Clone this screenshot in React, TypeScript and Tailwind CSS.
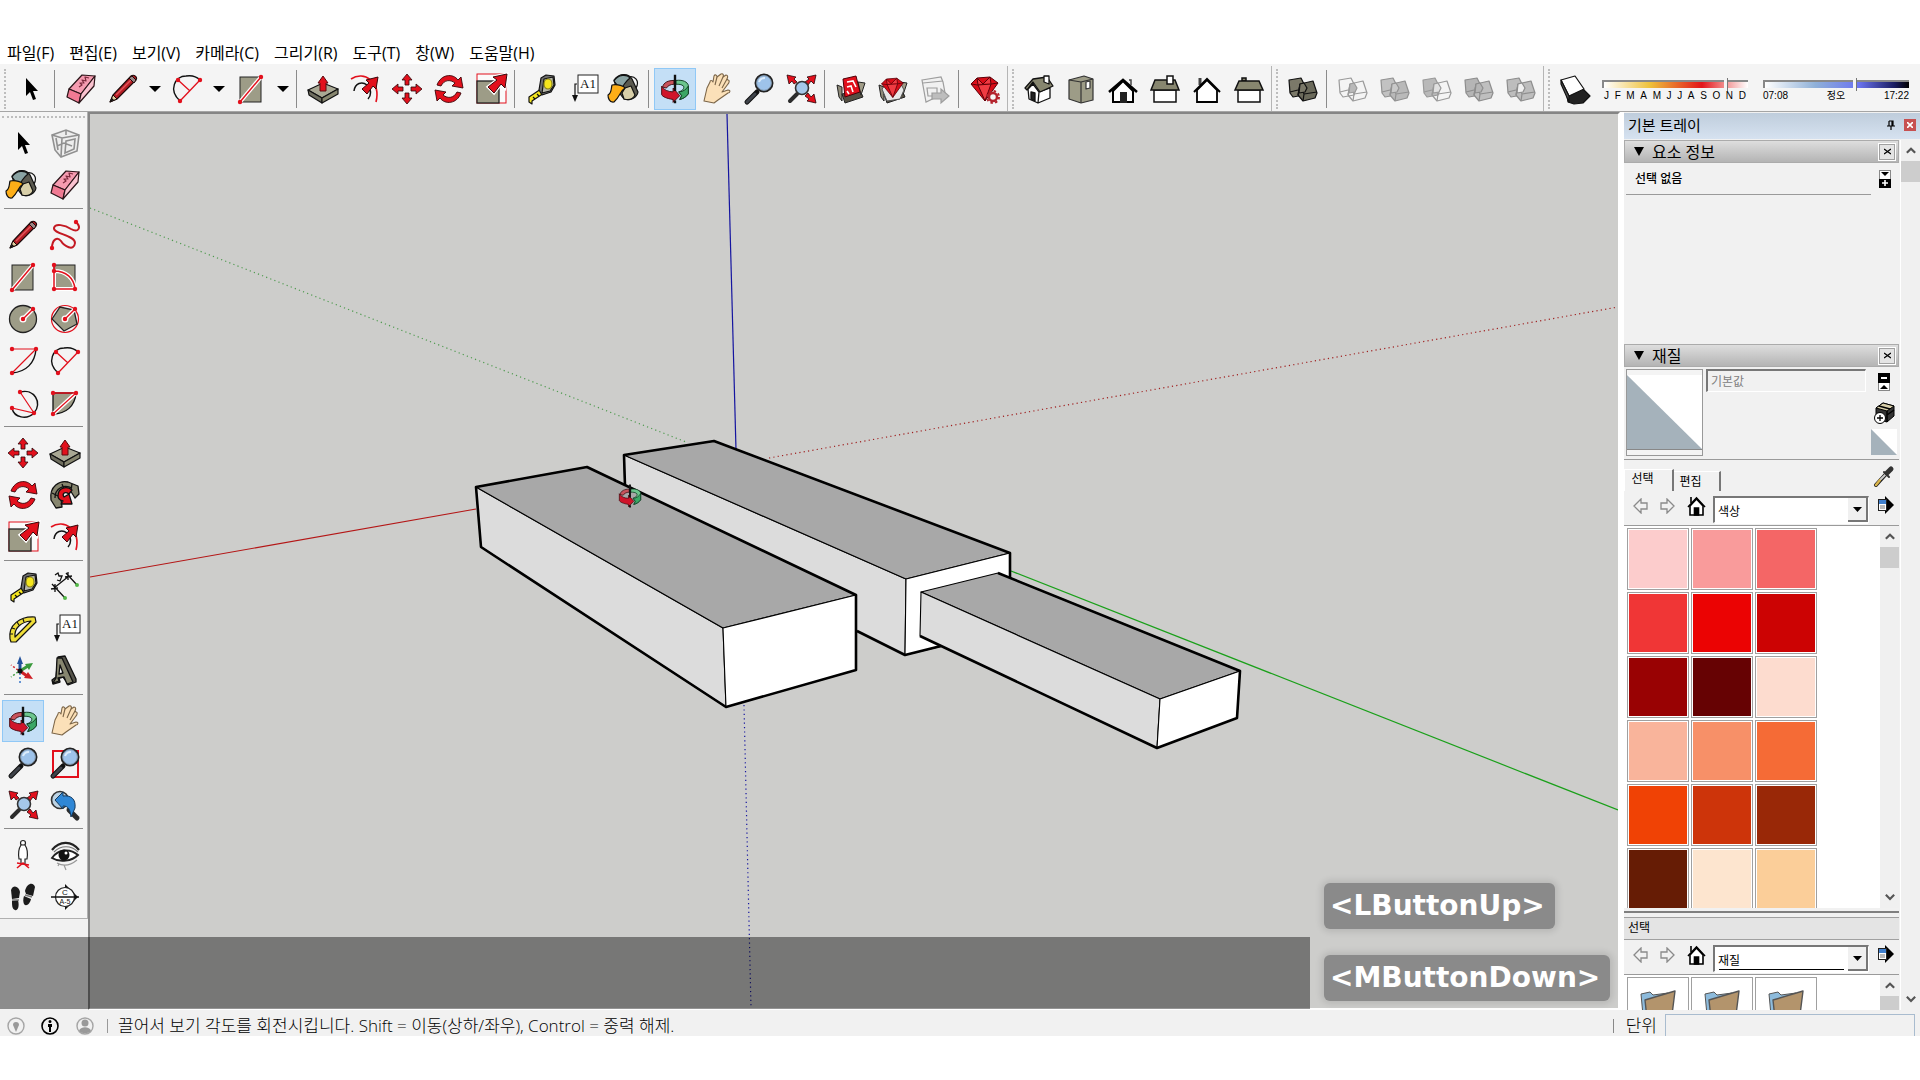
import type { FC, ReactNode } from 'react';

const RED = '#e2101c';
const STONE = '#9d9c87';

/* ---------- shared drawing parts ---------- */

const Dots: FC<{ at: [number, number][] }> = ({ at }) => (
  <g fill={RED}>
    {at.map(([x, y]) => (
      <circle key={`${x}-${y}`} cx={x} cy={y} r="2.2" />
    ))}
  </g>
);

const arrowUp = 'M21 6 L26 12 H23 V17 H19 V12 H16 Z';
const bigArrow = 'M37 6 L35 20 L31 16 L24 25 L18 19 L27 12 L23 9 Z';

const lens = (
  <>
    <path d="M9 34 L19 24" stroke="#111" strokeWidth="5" strokeLinecap="round" />
    <path d="M9 34 L17 26" stroke="#3f434a" strokeWidth="3" strokeLinecap="round" />
    <circle cx="26" cy="15" r="8.5" fill="#9ec3ea" stroke="#222" strokeWidth="2" />
    <circle cx="26" cy="15" r="7.4" fill="none" stroke="#7f93a8" strokeWidth="1" />
    <path d="M21 14 A6 6 0 0 1 27 10" stroke="#dcecfb" strokeWidth="2" />
  </>
);

const orbit = (
  <>
    <path d="M8 19 C9 14 14 12 20 12 V16 C16 16 13 18 12 20 Z" fill="#c8535b" stroke="#401014" />
    <path d="M22 12 C30 11 34 14 35 17 V26 C33 29 30 31 26 32 L28 28 L25 24 C29 23 31 20 30 18 C28 16 25 16 22 16 Z" fill="#6cc58d" stroke="#0f3d22" />
    <path d="M35 18 V26 C33 29 30 31 26 32 L28 28 L25 24 C30 24 33 21 35 18 Z" fill="#3aa765" stroke="#0f3d22" />
    <path d="M7 18 C9 22 14 24 19 24 V20 L26 28 L19 35 V32 C12 31 8 29 7 27 Z" fill="#d0142a" stroke="#4a0a10" />
    <path d="M21 6 V23 M21 33 V36" stroke="#111" strokeWidth="2.5" />
  </>
);

const solid = (back: string, front: string, line: string, inner: string) => (
  <g stroke={line} strokeWidth="1.2" strokeLinejoin="round">
    <path d="M7 12 L19 10 L24 20 L22 27 L11 29 L8 25 Z" fill={back} />
    <path d="M18 16 L31 13 L35 25 L33 30 L21 33 L16 27 Z" fill={front} />
    <path d="M16 27 L18 16 M21 33 L22 26 L35 24 M22 26 L18 16 M8 24 L16 22" fill="none" />
    <path d="M18 16 L22 15 L25 20 L23 24 L17 25 Z" fill={inner} />
  </g>
);

const openBox = (
  <g stroke="#222" strokeLinejoin="round">
    <path d="M7 17 L12 19 L12 33 L9 29 Z" fill="#8e8a78" />
    <path d="M12 26 L30 22 L33 29 L15 35 Z" fill="#555043" />
    <path d="M28 14 L35 15 L31 27 Z" fill="#a19d89" />
  </g>
);

const gem = (
  <g stroke="#5d0008" strokeWidth="1" strokeLinejoin="round">
    <path d="M7 16 L13 10 L26 9 L34 15 L21 33 Z" fill="#d90d18" />
    <path d="M7 16 L14 17 L27 16 L34 15 M14 17 L13 10 L19 16 L26 9 L27 16 L21 33 L14 17" fill="#ef3b42" />
  </g>
);

const icons: Record<string, ReactNode> = {
  select: <path d="M16 10 V28 L20 24 L23 32 L26 31 L23 23 H28 Z" fill="#000" />,
  component: (
    <g stroke="#909090" fill="none" strokeWidth="1.6">
      <path d="M8 13 L22 8 L35 13 L33 29 L17 35 L11 28 Z" fill="#ededed" />
      <path d="M8 13 L18 16 L35 13 M18 16 L17 35 M22 8 L22 13 M12 16 L14 28 M22 19 L31 17 L30 27 L21 31 Z M13 24 L20 21 L28 24" />
    </g>
  ),
  bucket: (
    <g stroke="#111" strokeWidth="1.2" strokeLinejoin="round">
      <path d="M24 9 C31 7 36 13 32 20" fill="none" />
      <path d="M10 12 C16 4 25 6 28 11 L34 24 C33 30 26 33 20 31 L13 22 Z" fill="#5b5a50" />
      <path d="M21 20 L27 18 L31 27 C29 31 26 33 20 31 L18 25 Z" fill="#d8cfa9" />
      <path d="M10 13 C14 6 23 6 26 10 C22 13 18 19 17 22 Z" fill="#8aa3a3" />
      <path d="M8 17 C14 16 20 18 21 20 C16 23 16 29 10 34 C5 35 4 29 4 27 C8 25 7 20 8 17 Z" fill="#fdae17" />
    </g>
  ),
  eraser: (
    <g stroke="#2a1418" strokeWidth="1.2" strokeLinejoin="round">
      <path d="M22 7 L35 8 L21 26 L9 21 Z" fill="#f59bb0" />
      <path d="M9 21 L21 26 L19 35 L7 29 Z" fill="#f07a93" />
      <path d="M21 26 L35 8 L34 18 L19 35 Z" fill="#fbc3d0" />
      <path d="M19 19 L22 17 L20 15 L24 15 L22 12 L26 13 L25 9 L29 10" fill="none" stroke="#7c2a3d" />
    </g>
  ),
  pencil: (
    <g strokeLinejoin="round">
      <path d="M8 34 L11 27 L29 8 C32 6 36 9 34 12 L15 31 Z" fill="#b51d24" stroke="#1c0a0a" strokeWidth="1.1" />
      <path d="M8 34 L11 27 L15 31 Z" fill="#e5cf9f" stroke="#1c0a0a" />
      <path d="M8 34 L10 30 L12 32 Z" fill="#111" />
      <path d="M14 27 L29 12" stroke="#e2565b" strokeWidth="1.5" />
      <path d="M27 10 L32 15 L34 12 L30 8 Z" fill="#9b8686" stroke="#1c0a0a" />
    </g>
  ),
  freehand: (
    <>
      <path d="M32 8 C38 14 34 19 27 15 C21 11 11 9 10 14 C9 20 31 21 31 29 C30 38 20 32 17 27 C13 22 8 26 8 34" fill="none" stroke="#c31922" strokeWidth="2" />
      <Dots at={[[32, 8], [8, 34]]} />
    </>
  ),
  rect: (
    <>
      <rect x="10" y="9" width="21" height="25" fill={STONE} stroke="#222" />
      <path d="M10 34 L31 9" stroke="#fff" strokeWidth="4" />
      <path d="M10 34 L31 9" stroke={RED} strokeWidth="1.5" />
      <Dots at={[[10, 34], [31, 9]]} />
    </>
  ),
  rotatedRect: (
    <>
      <rect x="10" y="9" width="21" height="25" fill={STONE} stroke="#222" />
      <path d="M10 15 C22 15 30 22 31 33 H10 Z" fill={STONE} stroke="#fff" strokeWidth="4" />
      <path d="M10 9 V33 H31 C30 22 22 15 10 15" fill="none" stroke={RED} strokeWidth="1.5" />
      <Dots at={[[10, 9], [10, 15], [10, 33], [31, 33]]} />
    </>
  ),
  circle: (
    <>
      <circle cx="21" cy="21" r="13.5" fill={STONE} stroke="#222" strokeWidth="1.3" />
      <path d="M21 21 L31 11" stroke="#fff" strokeWidth="4" />
      <circle cx="21" cy="21" r="3.5" fill="#fff" />
      <path d="M21 21 L31 11" stroke={RED} strokeWidth="1.5" />
      <Dots at={[[21, 21], [31, 11]]} />
    </>
  ),
  polygon: (
    <>
      <circle cx="21" cy="21" r="13.5" fill="none" stroke={RED} strokeWidth="1.2" />
      <path d="M8 21 L16 9 L30 12 L33 26 L20 33 Z" fill={STONE} stroke="#222" strokeWidth="1.3" />
      <path d="M21 21 L31 11" stroke="#fff" strokeWidth="4" />
      <circle cx="21" cy="21" r="3.5" fill="#fff" />
      <path d="M21 21 L31 11" stroke={RED} strokeWidth="1.5" />
      <Dots at={[[21, 21], [31, 11]]} />
    </>
  ),
  arcCenter: (
    <>
      <path d="M34 9 C33 23 24 32 10 33" fill="none" stroke="#111" strokeWidth="1.4" />
      <path d="M10 9 H34 L10 33" fill="none" stroke={RED} strokeWidth="1.2" />
      <Dots at={[[10, 9], [34, 9], [10, 33]]} />
    </>
  ),
  arc: (
    <>
      <path d="M14 33 C2 22 9 8 20 8 C26 7 31 9 34 12" fill="none" stroke="#111" strokeWidth="1.4" />
      <path d="M14 33 L34 12 M12 12 L24 23" stroke={RED} strokeWidth="1.3" />
      <Dots at={[[12, 12], [34, 12], [14, 33]]} />
    </>
  ),
  arc3: (
    <>
      <path d="M18 10 C32 6 41 21 32 31 C25 38 12 36 10 26" fill="none" stroke="#111" strokeWidth="1.4" />
      <path d="M18 10 L32 31 L10 26" fill="none" stroke={RED} strokeWidth="1.2" />
      <Dots at={[[18, 10], [10, 26], [32, 31]]} />
    </>
  ),
  pie: (
    <>
      <path d="M9 11 H32 C31 24 22 32 9 32 Z" fill={STONE} stroke="#111" strokeWidth="1.3" />
      <path d="M32 11 L9 32" stroke="#fff" strokeWidth="4" />
      <path d="M9 11 H32 L9 32" fill="none" stroke={RED} strokeWidth="1.3" />
      <Dots at={[[9, 11], [32, 11], [9, 32]]} />
    </>
  ),
  move: (
    <g fill={RED} stroke="#2a0508" strokeWidth="0.8">
      <path d={arrowUp} />
      <path d={arrowUp} transform="rotate(90 21 21)" />
      <path d={arrowUp} transform="rotate(180 21 21)" />
      <path d={arrowUp} transform="rotate(270 21 21)" />
    </g>
  ),
  pushPull: (
    <>
      <g stroke="#111" strokeWidth="1.2" strokeLinejoin="round">
        <path d="M6 22 L21 15 L36 21 L20 30 Z" fill="#a9a894" />
        <path d="M6 22 L20 30 V35 L7 27 Z" fill="#6f6e5f" />
        <path d="M20 30 L36 21 V26 L20 35 Z" fill="#87866f" />
      </g>
      <path d="M21 8 L26 15 H24 V23 H18 V15 H16 Z" fill={RED} stroke="#5a0a0e" />
    </>
  ),
  rotate: (
    <g fill={RED} stroke="#3a0508" strokeWidth="0.9" strokeLinejoin="round">
      <path d="M9 17 C13 6 25 5 30 12 L33 9 L35 20 L24 18 L27 15 C22 11 16 12 13 18 Z" />
      <path d="M9 17 C13 6 25 5 30 12 L33 9 L35 20 L24 18 L27 15 C22 11 16 12 13 18 Z" transform="rotate(180 21 21)" />
    </g>
  ),
  followMe: (
    <g stroke="#111" strokeWidth="1.3" strokeLinejoin="round">
      <path d="M7 26 C5 12 16 6 24 8 L34 12 L35 20 L31 24 L26 16 C20 14 15 19 17 25 L18 33 L12 34 Z" fill="#87866f" />
      <path d="M11 24 C11 14 20 10 28 14 M8 19 L14 22 M18 10 L20 15 M28 10 L27 16" fill="none" />
      <path d="M14 22 C14 13 23 12 28 16 L25 20 C20 17 18 20 20 23 L25 20 L28 30 L17 30 L19 27 C15 26 14 24 14 22 Z" fill={RED} />
    </g>
  ),
  scale: (
    <>
      <rect x="7" y="6" width="29" height="29" fill="#fff" fillOpacity="0.5" stroke={RED} />
      <rect x="7" y="13" width="22" height="22" fill={STONE} stroke="#222" strokeWidth="1.3" />
      <path d={bigArrow} fill={RED} stroke="#fff" strokeWidth="3" />
      <path d={bigArrow} fill={RED} stroke="#3a0508" />
    </>
  ),
  offset: (
    <>
      <path d="M7 11 C20 2 37 14 32 34" fill="none" stroke={RED} strokeWidth="1.6" />
      <path d="M10 23 C11 15 18 13 23 17 C28 22 27 28 24 31" fill="none" stroke="#111" strokeWidth="1.5" />
      <path d="M34 9 L32 21 L29 18 L23 26 L18 21 L25 15 L22 12 Z" fill={RED} stroke="#3a0508" />
    </>
  ),
  tape: (
    <g stroke="#111" strokeWidth="1.2" strokeLinejoin="round">
      <path d="M9 29 L21 21 L24 25 L12 33 V36 L9 34 Z" fill="#f5e61d" />
      <path d="M21 10 L26 7 L34 8 L35 17 L31 24 L22 27 L19 22 Z" fill="#6f7070" />
      <path d="M24 11 L33 9 L34 17 L30 23 L22 25 Z" fill="#b5b5a8" />
      <ellipse cx="28" cy="16" rx="4" ry="5" fill="#f5e61d" stroke="#8d8617" />
      <path d="M13 29 L15 31 M17 26 L19 28" />
    </g>
  ),
  dimension: (
    <>
      <path d="M10 22 L25 10 M8 18 L21 32 M22 7 L33 19 M7 23 L14 22 M21 11 L28 10 M11 18 L11 26 M24 6 V14" stroke="#111" strokeWidth="1.3" />
      <path d="M11 9 L14 7 L15 10 L18 10 L16 15 L13 14" fill="none" stroke="#111" strokeWidth="1.3" />
      <circle cx="21" cy="32" r="2" fill="#54b749" />
      <circle cx="33" cy="19" r="2" fill="#54b749" />
    </>
  ),
  protractor: (
    <g stroke="#111" strokeWidth="1.2" strokeLinejoin="round">
      <path d="M8 31 C6 17 18 8 33 9 L34 14 L14 34 L9 34 Z" fill="#efdd38" />
      <path d="M13 29 C12 20 19 14 29 13 Z" fill="#f4f4f4" />
      <path d="M8 26 L11 26 M10 20 L13 21 M15 14 L17 17 M21 11 L22 14" />
    </g>
  ),
  text: (
    <>
      <path d="M15 16 H13 V28" fill="none" stroke="#111" strokeWidth="1.2" />
      <path d="M10 27 H16 L13 34 Z" fill="#111" />
      <rect x="16" y="7" width="20" height="18" fill="#fff" stroke="#222" />
      <text x="26" y="20" textAnchor="middle" fontSize="13" fontFamily="Liberation Serif, serif" fill="#111">A1</text>
    </>
  ),
  axes: (
    <>
      <path d="M18 21 V12" stroke="#23529c" strokeWidth="3" />
      <path d="M18 6 L21 14 H15 Z" fill="#23529c" />
      <path d="M18 21 L26 16" stroke="#3a9a3c" strokeWidth="3" />
      <path d="M31 13 L27 20 L23 14 Z" fill="#3a9a3c" />
      <path d="M18 21 L25 26" stroke="#cf2026" strokeWidth="3" />
      <path d="M31 29 L22 28 L26 22 Z" fill="#cf2026" />
      <path d="M18 23 V33" stroke="#3a75c8" strokeWidth="1.5" strokeDasharray="2 2" />
      <path d="M16 22 L9 27" stroke="#3a9a3c" strokeWidth="1.5" strokeDasharray="2 2" />
      <path d="M16 20 L9 15" stroke="#cf2026" strokeWidth="1.5" strokeDasharray="2 2" />
      <circle cx="18" cy="21" r="2.5" fill="#111" />
    </>
  ),
  text3d: (
    <g stroke="#111" strokeWidth="1.3" strokeLinejoin="round">
      <path d="M14 7 L21 6 L32 29 L32 32 L24 35 L22 31 L19 27 L15 28 L16 32 L9 34 L8 30 L12 27 Z" fill="#55544a" />
      <path d="M13 8 L18 8 L29 32 L23 34 L20 27 L14 28 L15 31 L9 33 L12 28 Z" fill="#87866f" />
      <path d="M16 15 L19 23 L15 24 Z" fill="#f4f4f4" />
    </g>
  ),
  orbit,
  pan: (
    <g stroke="#7b6548" strokeWidth="1.1" strokeLinejoin="round">
      <path d="M8 33 L11 20 L14 14 C14 12 16 12 17 14 L18 8 C19 6 21 7 21 9 L25 6 C27 5 28 7 27 9 L30 7 C32 7 32 9 31 11 L32 12 C34 12 33 15 32 16 L26 24 L32 22 C35 22 34 25 32 25 L22 32 L18 35 Z" fill="#fbe0b8" />
      <path d="M19 17 L21 9 M23 18 L27 9 M26 20 L31 11" fill="none" />
    </g>
  ),
  zoom: lens,
  zoomWindow: (
    <>
      <rect x="9" y="9" width="25" height="26" fill="none" stroke={RED} strokeWidth="2" />
      {lens}
    </>
  ),
  extents: (
    <>
      <g fill={RED} stroke="#2a0508" strokeWidth="0.8">
        <path d="M7 7 L16 9 L14 11 L17 14 L14 16 L12 13 L9 16 Z" />
        <path d="M36 7 L27 9 L29 11 L25 14 L28 17 L31 13 L34 16 Z" />
        <path d="M36 35 L27 33 L29 31 L25 28 L28 25 L31 29 L34 26 Z" />
      </g>
      <path d="M10 33 L17 26" stroke="#2c2c2c" strokeWidth="4" strokeLinecap="round" />
      <circle cx="22" cy="20" r="6.5" fill="#a5c8ea" stroke="#333" strokeWidth="1.6" />
    </>
  ),
  previous: (
    <>
      <path d="M25 26 L33 34" stroke="#2c2c2c" strokeWidth="5" strokeLinecap="round" />
      <circle cx="16" cy="16" r="8.5" fill="#bcd3e4" stroke="#333" strokeWidth="1.6" />
      <path d="M11 16 L19 8 V12 C27 11 32 15 31 24 L27 33 C26 26 25 22 19 22 V25 Z" fill="#2f87d6" stroke="#163a5d" />
    </>
  ),
  position: (
    <>
      <circle cx="21" cy="9" r="2.5" fill="#fff" stroke="#222" strokeWidth="1.2" />
      <path d="M19 11 H23 C25 14 26 19 25 25 H23 V30 H19 V25 H17 C16 19 17 14 19 11 Z" fill="#fff" stroke="#222" strokeWidth="1.2" />
      <path d="M15 34 L21 29 L27 34 M15 29 L27 31" fill="none" stroke={RED} strokeWidth="1.6" />
    </>
  ),
  look: (
    <>
      <path d="M8 16 C16 6 28 7 35 16" fill="none" stroke="#222" strokeWidth="2.2" />
      <path d="M10 18 C17 11 27 11 34 18" fill="none" stroke="#777" strokeWidth="1.2" />
      <path d="M8 24 C14 15 26 14 34 21 C28 27 16 29 8 24 Z" fill="#fff" stroke="#222" strokeWidth="2" />
      <circle cx="20" cy="21" r="5.5" fill="#111" />
      <circle cx="22" cy="19" r="1.5" fill="#fff" />
      <path d="M13 29 C20 33 27 31 33 26 M20 31 L22 36 M15 30 L14 32" fill="none" stroke="#999" strokeWidth="1.2" />
    </>
  ),
  walk: (
    <g fill="#1c1c1c">
      <path d="M9 14 C11 8 17 10 18 16 L17 22 L10 23 Z" />
      <path d="M10 25 L16 24 C18 32 15 35 13 34 C10 33 10 29 10 25 Z" />
      <path d="M23 15 C25 6 32 6 33 11 L31 20 L24 18 Z" />
      <path d="M22 20 L29 23 C28 28 24 31 22 28 C21 26 21 23 22 20 Z" />
      <path d="M10 24 H17 M23 19 L30 21" stroke="#777" strokeWidth="1.5" />
    </g>
  ),
  section: (
    <>
      <path d="M21 8 L34 21 L21 34 Z" fill="#111" />
      <circle cx="21" cy="21" r="9.5" fill="#fff" stroke="#222" strokeWidth="1.2" />
      <path d="M7 21 H35" stroke="#111" strokeWidth="1.5" />
      <g fill="#111" fontFamily="Liberation Sans, sans-serif" textAnchor="middle">
        <text x="21" y="19" fontSize="8">C</text>
        <text x="21" y="28" fontSize="7">A-5</text>
      </g>
    </>
  ),
  warehouse: (
    <>
      {openBox}
      <path d="M13 11 L26 8 L30 24 L15 29 Z" fill={RED} stroke="#4d0007" />
      <path d="M17 14 L23 13 L26 19 M17 19 L21 18 L23 24 M17 23 L19 26" fill="none" stroke="#fff" strokeWidth="1.6" />
    </>
  ),
  extension: (
    <>
      {openBox}
      <path d="M10 21 L16 14 L28 14 L32 22 L28 31 L15 33 Z" fill="#e8e8e8" stroke="#555" />
      <g transform="translate(4 3) scale(.8)">{gem}</g>
    </>
  ),
  send: (
    <g stroke="#9d9d9d" strokeWidth="1.2" fill="#f1f1f1">
      <path d="M8 12 L27 9 L29 14 L31 25 L12 34 Z" />
      <path d="M9 15 L29 13 M13 20 H23 V28 H14 Z" />
      <path d="M18 25 H27 V21 L35 28 L27 35 V31 H18 Z" fill="#bdbdbd" />
    </g>
  ),
  rubyGear: (
    <>
      {gem}
      <circle cx="29" cy="29" r="4" fill="#f4f4f4" stroke="#b3222c" strokeWidth="2.5" />
      <circle cx="29" cy="29" r="6" fill="none" stroke="#b3222c" strokeWidth="2" strokeDasharray="2.4 2.3" />
    </>
  ),
  viewIso: (
    <g stroke="#111" strokeWidth="1.3" strokeLinejoin="round">
      <path d="M10 21 L15 16 L21 24 L20 35 L11 31 Z M21 24 L32 20 V30 L20 35" fill="#fff" />
      <path d="M7 20 L15 11 L29 9 L35 18 L22 24 L15 14 L9 22 Z" fill="#87866f" />
      <path d="M26 8 H31 V16 L26 14 Z" fill="#fff" />
      <path d="M13 24 L17 25 V33 L13 31 Z" fill="#222" />
    </g>
  ),
  viewTop: (
    <g stroke="#333" strokeWidth="1.2" strokeLinejoin="round">
      <path d="M9 12 L24 8 L33 11 L33 32 L21 35 L9 31 Z" fill="#9d9c87" />
      <path d="M9 12 L21 14 V35 M21 14 L33 11" fill="none" />
      <path d="M26 14 L30 13 V20 L26 21 Z" fill="#fff" />
    </g>
  ),
  viewFront: (
    <>
      <path d="M11 23 V34 H31 V23 L21 13 Z" fill="#fff" stroke="#000" strokeWidth="2" />
      <path d="M7 24 L21 12 L35 24" fill="none" stroke="#000" strokeWidth="2.5" />
      <path d="M18 35 V24 H25 V35 Z" fill="#222" />
      <path d="M27 12 H29 V17" fill="none" stroke="#444" strokeWidth="1.5" />
    </>
  ),
  viewRight: (
    <g stroke="#111" strokeWidth="1.5">
      <path d="M10 22 H32 V34 H10 Z" fill="#fff" />
      <path d="M11 12 H31 L35 22 H7 Z" fill="#87866f" />
      <path d="M23 8 H29 V16 H23 Z" fill="#fff" />
    </g>
  ),
  viewBack: (
    <>
      <path d="M14 10 V17" stroke="#444" strokeWidth="3" />
      <path d="M11 22 V34 H31 V22 L21 12 Z" fill="#fff" stroke="#000" strokeWidth="1.8" />
      <path d="M8 24 L21 11 L34 24" fill="none" stroke="#000" strokeWidth="2" />
    </>
  ),
  viewLeft: (
    <g stroke="#111" strokeWidth="1.5">
      <path d="M14 10 H18 V13 H14 Z" fill="#87866f" />
      <path d="M10 22 H32 V34 H10 Z" fill="#fff" />
      <path d="M11 13 H31 L35 22 H7 Z" fill="#87866f" />
    </g>
  ),
  outerShell: solid('#7b7969', '#6b6a5b', '#111', '#7b7969'),
  intersect: solid('none', 'none', '#9a9a9a', '#b9b9b9'),
  union: solid('#c2c2c2', '#b9b9b9', '#929292', '#c9c9c9'),
  subtract: solid('#b9b9b9', 'none', '#9a9a9a', '#e0e0e0'),
  trim: solid('#b5b5b5', '#bfbfbf', '#8d8d8d', '#b5b5b5'),
  split: solid('#bdbdbd', '#bdbdbd', '#8d8d8d', '#f0f0f0'),
  shadow: (
    <g stroke="#111" strokeWidth="1.2" strokeLinejoin="round">
      <path d="M13 28 L29 21 L36 28 L29 35 L20 36 L14 34 Z" fill="#222" />
      <path d="M7 12 L21 8 L30 21 L15 28 Z" fill="#fff" />
      <path d="M7 12 L15 28 V34 L7 16 Z" fill="#555" />
    </g>
  ),
};

/* ---------- toolbars ---------- */

const Tool: FC<{ name: string; active?: boolean }> = ({ name, active }) => (
  <button
    type="button"
    aria-label={name}
    className={
      active
        ? 'size-[42px] shrink-0 border border-[#90c8f6] bg-[#c4dff6]'
        : 'size-[42px] shrink-0'
    }
  >
    <svg viewBox="0 0 42 42" fill="none" className="size-full">{icons[name]}</svg>
  </button>
);

const DropTool: FC<{ name: string }> = ({ name }) => (
  <div className="flex items-center">
    <Tool name={name} />
    <button type="button" aria-label={`${name} menu`} className="flex w-[22px] justify-center">
      <svg viewBox="0 0 12 8" className="w-3"><path d="M0 1 H12 L6 7 Z" /></svg>
    </button>
  </div>
);

const Divider: FC = () => <div className="ml-0.5 mr-[5px] h-[38px] w-px shrink-0 bg-[#8b8b8b]" />;
const Grip: FC = () => <div className="mx-1 h-10 w-0 shrink-0 border-l-2 border-dotted border-[#bdbdbd]" />;
const BarEnd: FC = () => <div className="ml-px h-full w-px shrink-0 bg-[#b5b5b5]" />;

const toolGroups = [
  ['pushPull', 'offset', 'move', 'rotate', 'scale'],
  ['tape', 'text', 'bucket'],
  ['orbit', 'pan', 'zoom', 'extents'],
  ['warehouse', 'extension', 'send'],
  ['rubyGear'],
];
const viewTools = ['viewIso', 'viewTop', 'viewFront', 'viewRight', 'viewBack', 'viewLeft'];
const solidTools = ['intersect', 'union', 'subtract', 'trim', 'split'];

const rangeClass =
  'block h-2 w-full appearance-none border-l-2 border-t-2 border-[#888] [&::-webkit-slider-thumb]:h-[13px] [&::-webkit-slider-thumb]:w-1 [&::-webkit-slider-thumb]:appearance-none [&::-webkit-slider-thumb]:border-r [&::-webkit-slider-thumb]:border-[#777] [&::-webkit-slider-thumb]:bg-[#f4f4f4]';

const TopToolbar: FC = () => (
  <div className="flex h-12 shrink-0 items-center overflow-hidden border-b border-[#a5a5a5] bg-[#f4f4f4] pt-0.5">
    <Grip />
    <Tool name="select" />
    <Divider />
    <Tool name="eraser" />
    <DropTool name="pencil" />
    <DropTool name="arc" />
    <DropTool name="rect" />
    {toolGroups.map((group) => (
      <div key={group[0]} className="flex items-center">
        <Divider />
        {group.map((name) => (
          <Tool key={name} name={name} active={name === 'orbit'} />
        ))}
      </div>
    ))}
    <BarEnd />
    <Grip />
    {viewTools.map((name) => <Tool key={name} name={name} />)}
    <BarEnd />
    <Grip />
    <Tool name="outerShell" />
    <Divider />
    {solidTools.map((name) => <Tool key={name} name={name} />)}
    <BarEnd />
    <Grip />
    <Tool name="shadow" />
    <div className="ml-1.5 mt-1 flex gap-[15px] font-['Liberation_Sans','Noto_Sans_CJK_KR',sans-serif] text-[10px] leading-3">
      <div className="w-[146px]">
        <input
          type="range"
          aria-label="날짜"
          defaultValue={86}
          className={`${rangeClass} bg-[linear-gradient(to_right,#ffffff,#eec13a_32%,#e3141a_68%,#f08080_82%,#ffffff)]`}
        />
        <div className="mt-0.5 flex justify-between px-0.5">
          {'JFMAMJJASOND'.split('').map((month, i) => <span key={i}>{month}</span>)}
        </div>
      </div>
      <div className="w-[146px]">
        <input
          type="range"
          aria-label="시간"
          defaultValue={63}
          className={`${rangeClass} bg-[linear-gradient(to_right,#ffffff,#8fb0d8_35%,#6b74f0_65%,#1a1c60_90%,#000000)]`}
        />
        <div className="mt-0.5 flex justify-between">
          <span>07:08</span>
          <span>정오</span>
          <span>17:22</span>
        </div>
      </div>
    </div>
  </div>
);

const sideGroups = [
  ['select', 'component', 'bucket', 'eraser'],
  ['pencil', 'freehand', 'rect', 'rotatedRect', 'circle', 'polygon', 'arcCenter', 'arc', 'arc3', 'pie'],
  ['move', 'pushPull', 'rotate', 'followMe', 'scale', 'offset'],
  ['tape', 'dimension', 'protractor', 'text', 'axes', 'text3d'],
  ['orbit', 'pan', 'zoom', 'zoomWindow', 'extents', 'previous'],
  ['position', 'look', 'walk', 'section'],
];

const SideToolbar: FC = () => (
  <aside className="w-[88px] shrink-0 bg-[#f1f1f1]">
    <div className="border-b border-r border-[#b0b0b0] bg-[#f4f4f4] px-0.5 pt-1">
      <div className="mb-1 border-t-2 border-dotted border-[#bdbdbd]" />
      {sideGroups.map((group, i) => (
        <div key={group[0]}>
          {i > 0 && <div className="mx-0.5 mb-[5px] mt-0.5 h-px bg-[#8b8b8b]" />}
          <div className="grid grid-cols-[42px_42px]">
            {group.map((name) => (
              <Tool key={name} name={name} active={name === 'orbit'} />
            ))}
          </div>
        </div>
      ))}
    </div>
  </aside>
);

/* ---------- model view ---------- */

const Scene: FC = () => (
  <svg viewBox="90 114 1528 894" preserveAspectRatio="xMinYMin slice" className="size-full">
    <g fill="none" strokeWidth="1.2">
      <path d="M727 114 L736 450" stroke="#1414a0" />
      <path d="M744 705 L751 1008" stroke="#1414a0" strokeDasharray="1.2 3.2" />
      <path d="M1011 571 L1618 810" stroke="#1aa01a" />
      <path d="M90 208 L686 442" stroke="#4f9a4f" strokeDasharray="1.2 3.2" />
      <path d="M90 577 L476 509" stroke="#b41616" />
      <path d="M769 458 L1618 307" stroke="#a02020" strokeDasharray="1.2 3.2" />
    </g>
    <g stroke="#000" strokeWidth="1.1" strokeLinejoin="round">
      <path d="M624 455 L906 579 L905 655 L857 631 L625 500 Z" fill="#dcdcdc" />
      <path d="M624 455 L714 441 L1010 553 L906 579 Z" fill="#a8a8a8" />
      <path d="M906 579 L1010 553 V630 L905 655 Z" fill="#fff" />
      <path d="M921 592 L998 573 L1240 671 L1160 699 Z" fill="#a8a8a8" />
      <path d="M921 592 L1160 699 L1157 748 L941 646 L920 636 Z" fill="#dcdcdc" />
      <path d="M1160 699 L1240 671 L1237 718 L1157 748 Z" fill="#fff" />
    </g>
    <g fill="none" stroke="#000" strokeWidth="2.6" strokeLinejoin="round">
      <path d="M625 486 L624 455 L714 441 L1010 553 V578" />
      <path d="M857 631 L905 655 L941 646" />
      <path d="M998 573 L1240 671 L1237 718 L1157 748 L920 636" />
    </g>
    <g stroke="#000" strokeWidth="1.1" strokeLinejoin="round">
      <path d="M476 487 L723 628 L726 707 L481 547 Z" fill="#dcdcdc" />
      <path d="M476 487 L587 467 L856 595 L723 628 Z" fill="#a8a8a8" />
      <path d="M723 628 L856 595 V670 L726 707 Z" fill="#fff" />
      <path d="M476 487 L587 467 L856 595 V670 L726 707 L481 547 Z" fill="none" strokeWidth="2.6" />
    </g>
    <svg x="614" y="480" width="32" height="32" viewBox="0 0 42 42" fill="none">{orbit}</svg>
  </svg>
);

/* ---------- tray ---------- */

const Chevron: FC<{ down?: boolean }> = ({ down }) => (
  <svg viewBox="0 0 12 8" className="w-2.5" fill="none" stroke="#555" strokeWidth="2.6">
    <path d={down ? 'M1 1 L6 6 L11 1' : 'M1 7 L6 2 L11 7'} />
  </svg>
);

const ScrollBar: FC<{ down?: boolean }> = ({ down = true }) => (
  <div className="flex w-[19px] shrink-0 flex-col items-center justify-between overflow-hidden bg-[#f0f0f0]">
    <div className="flex w-full flex-col items-center">
      <div className="flex h-[21px] shrink-0 items-center"><Chevron /></div>
      <div className="h-[21px] w-full shrink-0 bg-[#cdcdcd]" />
    </div>
    {down && <div className="flex h-[21px] shrink-0 items-center"><Chevron down /></div>}
  </div>
);

const SectionTitle: FC<{ title: string }> = ({ title }) => (
  <div className="flex h-[23px] shrink-0 items-center border border-[#ababab] bg-linear-to-b from-[#dedede] to-[#b4b4b4] pl-[9px] pr-[3px]">
    <svg viewBox="0 0 10 9" className="mr-2 w-2.5"><path d="M0 0 H10 L5 9 Z" /></svg>
    <h2 className="flex-1 text-base leading-5">{title}</h2>
    <button type="button" aria-label={`${title} 닫기`} className="flex size-4 items-center justify-center border border-[#a0a0a0] bg-[#e4e4e4] outline outline-white">
      <svg viewBox="0 0 7 7" className="w-[7px]" stroke="#000" strokeWidth="1.4"><path d="M0 1 L7 6 M7 1 L0 6" /></svg>
    </button>
  </div>
);

const NavRow: FC<{ value: string; underline?: boolean }> = ({ value, underline }) => (
  <div className="flex h-[34px] shrink-0 items-start pl-[9px] pt-[5px]">
    <button type="button" aria-label="뒤로" className="mr-3 mt-0.5">
      <svg viewBox="0 0 15 16" className="w-[15px]" fill="none" stroke="#8a8a8a" strokeWidth="1.3"><path d="M1 8 L8 1 V5 H14 V11 H8 V15 Z" /></svg>
    </button>
    <button type="button" aria-label="앞으로" className="mr-3 mt-0.5">
      <svg viewBox="0 0 15 16" className="w-[15px]" fill="none" stroke="#8a8a8a" strokeWidth="1.3"><path d="M14 8 L7 1 V5 H1 V11 H7 V15 Z" /></svg>
    </button>
    <button type="button" aria-label="홈" className="mr-[7px]">
      <svg viewBox="0 0 19 20" className="w-[19px]" fill="#fff" stroke="#000" strokeWidth="1.6">
        <path d="M3 10 V19 H16 V10 L9.5 3 Z" />
        <path d="M1 11 L9.5 2 L18 11" fill="none" />
        <path d="M4 1 V7" />
        <path d="M7.5 12 H11.5 V19 H7.5 Z" fill="#000" />
      </svg>
    </button>
    <div className="relative h-[27px] w-[156px] border-b border-l-2 border-r border-t-2 border-b-white border-l-[#777] border-r-white border-t-[#777] bg-white">
      <select aria-label={value} className="h-full w-full appearance-none bg-white pl-[3px] text-xs leading-5 outline-none">
        <option>{value}</option>
      </select>
      {underline && <span className="absolute bottom-px left-1 right-6 h-px bg-black" />}
      <span className="pointer-events-none absolute bottom-0 right-0 top-0 flex w-5 items-center justify-center border-b-2 border-r-2 border-[#777] bg-[#f0f0f0]">
        <svg viewBox="0 0 9 5" className="w-[9px]"><path d="M0 0 H9 L4.5 5 Z" /></svg>
      </span>
    </div>
    <button type="button" aria-label="세부 정보" className="ml-[9px]">
      <svg viewBox="0 0 16 18" className="w-4">
        <path d="M7 0 L16 9 L7 18 Z" />
        <rect x="0.5" y="3.5" width="8" height="11" fill="#fff" stroke="#222" />
        <rect x="1" y="4" width="7" height="4" fill="#3f7fcd" />
        <path d="M2 10 H7 M2 12 H7" stroke="#777" />
      </svg>
    </button>
  </div>
);

const swatches = [
  'bg-[#fccccc]', 'bg-[#f99b9b]', 'bg-[#f46666]',
  'bg-[#f03636]', 'bg-[#eb0303]', 'bg-[#cc0303]',
  'bg-[#990203]', 'bg-[#660203]', 'bg-[#fddccf]',
  'bg-[#f9b49b]', 'bg-[#f79068]', 'bg-[#f56b36]',
  'bg-[#f04205]', 'bg-[#cd340a]', 'bg-[#992807]',
  'bg-[#661c05]', 'bg-[#fde5cf]', 'bg-[#fbce99]',
];

const Tray: FC = () => (
  <aside className="ml-1 flex w-[296px] shrink-0 flex-col overflow-hidden bg-[#f1f1f1] pt-px">
    <div className="flex h-[26px] shrink-0 items-center bg-linear-to-b from-[#bfcddc] to-[#d6e2f0] px-1 pb-0.5">
      <h1 className="flex-1 text-[15px] leading-5">기본 트레이</h1>
      <button type="button" aria-label="고정" className="mr-[9px]">
        <svg viewBox="0 0 8 10" className="w-2" fill="none" stroke="#000" strokeWidth="1.2"><path d="M2 1 H6 V6 M2 1 V6 M0 6 H8 M4 6 V10 M5 1 V6" /></svg>
      </button>
      <button type="button" aria-label="닫기" className="flex size-3 items-center justify-center bg-[#c75050]">
        <svg viewBox="0 0 6 6" className="w-1.5" stroke="#fff" strokeWidth="1.6"><path d="M0 0 L6 6 M6 0 L0 6" /></svg>
      </button>
    </div>
    <div className="flex min-h-0 flex-1 pt-px">
      <div className="flex w-[275px] flex-col">
        <SectionTitle title="요소 정보" />
        <section className="flex h-[181px] shrink-0 justify-between pl-0.5 pr-2 pt-1.5">
          <p className="h-[26px] w-[245px] border-b border-[#9a9a9a] pl-[9px] text-xs leading-5 font-medium">선택 없음</p>
          <svg viewBox="0 0 12 18" className="mt-px h-[18px]">
            <rect x="0.5" y="0.5" width="11" height="17" fill="#fff" stroke="#888" />
            <path d="M2 2 H10 L6 6 Z M0 9 H12 V18 H0 Z" />
            <path d="M3 13 H9 M6 10 V16" stroke="#fff" strokeWidth="1.6" />
          </svg>
        </section>
        <SectionTitle title="재질" />
        <div className="flex h-[93px] shrink-0 items-start border-b border-[#9a9a9a] pl-0.5 pt-0.5">
          <svg viewBox="0 0 77 87" className="w-[77px]">
            <rect x="0.5" y="0.5" width="76" height="86" fill="#f4f4f4" stroke="#999" />
            <rect x="1" y="6" width="75" height="74" fill="#fff" />
            <path d="M1 6 L76 80 H1 Z" fill="#a5b2bb" />
            <path d="M1 80.5 H76" stroke="#888" />
          </svg>
          <input
            aria-label="재질 이름"
            disabled
            defaultValue="기본값"
            className="ml-[3px] h-[23px] w-40 border border-l-2 border-t-2 border-white border-l-[#777] border-t-[#777] pl-[3px] text-xs leading-4 text-[#808080]"
          />
          <div className="ml-[5px] mt-1 flex w-[26px] flex-col items-center">
            <svg viewBox="0 0 12 18" className="h-[18px]">
              <rect x="0.5" y="0.5" width="11" height="17" fill="#fff" stroke="#888" />
              <path d="M0 0 H12 V10 H0 Z M2 16 H10 L6 12 Z" />
              <path d="M3 5 H9" stroke="#fff" strokeWidth="2" />
            </svg>
            <svg viewBox="0 0 22 22" className="mt-[11px] w-[22px]" stroke="#000" strokeLinejoin="round">
              <path d="M3 6 L10 1 L21 4 V14 L14 20 L3 17 Z" fill="#333" />
              <path d="M3 6 L10 1 L21 4 L14 9 Z" fill="#d8cfa9" />
              <path d="M6 4 L17 7 M14 9 V20 M14 13 L21 8" fill="none" strokeWidth="1.5" />
              <circle cx="7" cy="16" r="5.5" fill="#fff" />
              <path d="M4 16 H10 M7 13 V19" strokeWidth="1.3" />
            </svg>
            <svg viewBox="0 0 26 26" className="mt-[5px] w-[26px]">
              <path d="M0 0 H26 V26 Z" fill="#fff" />
              <path d="M0 0 L26 26 H0 Z" fill="#a5b2bb" />
            </svg>
          </div>
        </div>
        <div className="flex h-[31px] shrink-0 items-end text-xs">
          <button type="button" className="h-[22px] w-[50px] border-l border-r-2 border-t border-white border-r-[#777] pb-1 pr-3 leading-4">선택</button>
          <button type="button" className="h-5 w-[47px] border-r-2 border-t border-white border-r-[#777] pr-3 leading-4">편집</button>
          <svg viewBox="0 0 22 22" className="mb-1 ml-auto mr-1 w-[22px]" strokeLinecap="round">
            <path d="M3 20 L13 9" stroke="#222" strokeWidth="4" />
            <path d="M3 20 L7 15" stroke="#d9b44a" strokeWidth="2.5" />
            <path d="M8 14 L13 9" stroke="#ccc" strokeWidth="2" />
            <path d="M14 8 L18 4" stroke="#333" strokeWidth="5" />
            <path d="M11 7 L16 12" stroke="#333" strokeWidth="2" />
          </svg>
        </div>
        <NavRow value="색상" />
        <div className="flex h-[383px] shrink-0 justify-between overflow-hidden border-t border-[#9a9a9a] bg-white">
          <div className="grid grid-cols-[62px_62px_62px] content-start gap-0.5 pl-[3px] pt-0.5">
            {swatches.map((color, i) => (
              <button key={color} type="button" aria-label={`색상 ${i + 1}`} className="size-[62px] border border-[#a0a0a0] p-px">
                <span className={`block size-full ${color}`} />
              </button>
            ))}
          </div>
          <ScrollBar />
        </div>
        <div className="mt-[3px] h-0.5 shrink-0 bg-[#808080]" />
        <p className="mt-1 h-[23px] shrink-0 border-y border-[#a0a0a0] bg-[#e4e4e4] pl-1 text-xs leading-5">선택</p>
        <NavRow value="재질" underline />
        <div className="flex min-h-0 flex-1 justify-between overflow-hidden border-t border-[#9a9a9a] bg-white">
          <div className="grid grid-cols-[62px_62px_62px] content-start gap-0.5 pl-[3px] pt-0.5">
            {['재질 1', '재질 2', '재질 3'].map((name) => (
              <button key={name} type="button" aria-label={name} className="size-[62px] border border-[#a0a0a0]">
                <svg viewBox="0 0 60 60" className="size-full" stroke="#555" strokeLinejoin="round">
                  <path d="M13 16 L22 14 L25 17 L40 15 L38 45 L16 48 Z" fill="#8dbbdc" />
                  <path d="M17 22 L47 13 L43 45 L20 50 Z" fill="#b3946c" strokeWidth="1.4" />
                </svg>
              </button>
            ))}
          </div>
          <ScrollBar down={false} />
        </div>
      </div>
      <div className="ml-px flex border-l border-white">
        <ScrollBar />
      </div>
    </div>
  </aside>
);

const menus = ['파일(F)', '편집(E)', '보기(V)', '카메라(C)', '그리기(R)', '도구(T)', '창(W)', '도움말(H)'];

const keyClass =
  "whitespace-nowrap rounded-md bg-[#8a8a8a] pl-1.5 pr-2.5 font-['DejaVu_Sans',sans-serif] text-[28px] leading-[46px] font-black text-white shadow-[0_0_6px_3px_rgba(0,0,0,0.1)]";

const App: FC = () => {
  return (
    <div className="flex h-screen flex-col overflow-hidden bg-white pb-11 pt-10 font-['Open_Sans','Noto_Sans_CJK_KR',sans-serif] text-black">
      <nav className="flex h-6 shrink-0 items-center gap-[15px] pl-[7px] pt-0.5 text-base">
        {menus.map((menu) => (
          <button key={menu} type="button" className="leading-6">{menu}</button>
        ))}
      </nav>
      <TopToolbar />
      <div className="relative flex min-h-0 flex-1">
        <SideToolbar />
        <main className="min-w-0 flex-1 border-2 border-b-white border-l-[#858585] border-r-white border-t-[#858585] bg-[#cdcdcb]">
          <Scene />
        </main>
        <Tray />
        <div className="absolute bottom-px left-0 right-[610px] h-[72px] bg-black/42" />
        <div className="absolute bottom-[9px] right-[308px] flex w-72 flex-col items-start gap-[26px]">
          <kbd className={keyClass}>&lt;LButtonUp&gt;</kbd>
          <kbd className={keyClass}>&lt;MButtonDown&gt;</kbd>
        </div>
      </div>
      <footer className="flex h-[26px] shrink-0 items-center bg-[#f1f1f1] pl-[7px] pt-1.5 text-[17px]">
        <svg viewBox="0 0 88 18" className="h-[18px] shrink-0" fill="none">
          <circle cx="9" cy="9" r="8" stroke="#a5a5a5" strokeWidth="1.4" />
          <path d="M9 15 L6 8 A3 3 0 1 1 12 8 Z" fill="#999" />
          <circle cx="43" cy="9" r="8" stroke="#000" strokeWidth="1.6" />
          <path d="M43 3 A1.5 1.5 0 0 1 43 6 A1.5 1.5 0 0 1 43 3 M41 7 H45 V10 H44 V15 H42 V10 H41 Z" fill="#000" />
          <circle cx="78" cy="9" r="8" stroke="#a5a5a5" strokeWidth="1.4" />
          <circle cx="78" cy="6" r="3.5" fill="#999" />
          <path d="M72 14 C73 9 83 9 84 14 C81 17 75 17 72 14 Z" fill="#999" />
        </svg>
        <div className="ml-3 h-3.5 w-px bg-[#999]" />
        <p className="ml-2.5 flex-1 leading-5 font-light">끌어서 보기 각도를 회전시킵니다. Shift = 이동(상하/좌우), Control = 중력 해제.</p>
        <div className="mr-3 h-3.5 w-px bg-[#888]" />
        <label htmlFor="units" className="mr-2 leading-5 font-light">단위</label>
        <input id="units" className="-mt-0.5 mr-[5px] h-[22px] w-[250px] self-start border border-b-0 border-[#a9bccf]" />
      </footer>
    </div>
  );
};

export default App;
